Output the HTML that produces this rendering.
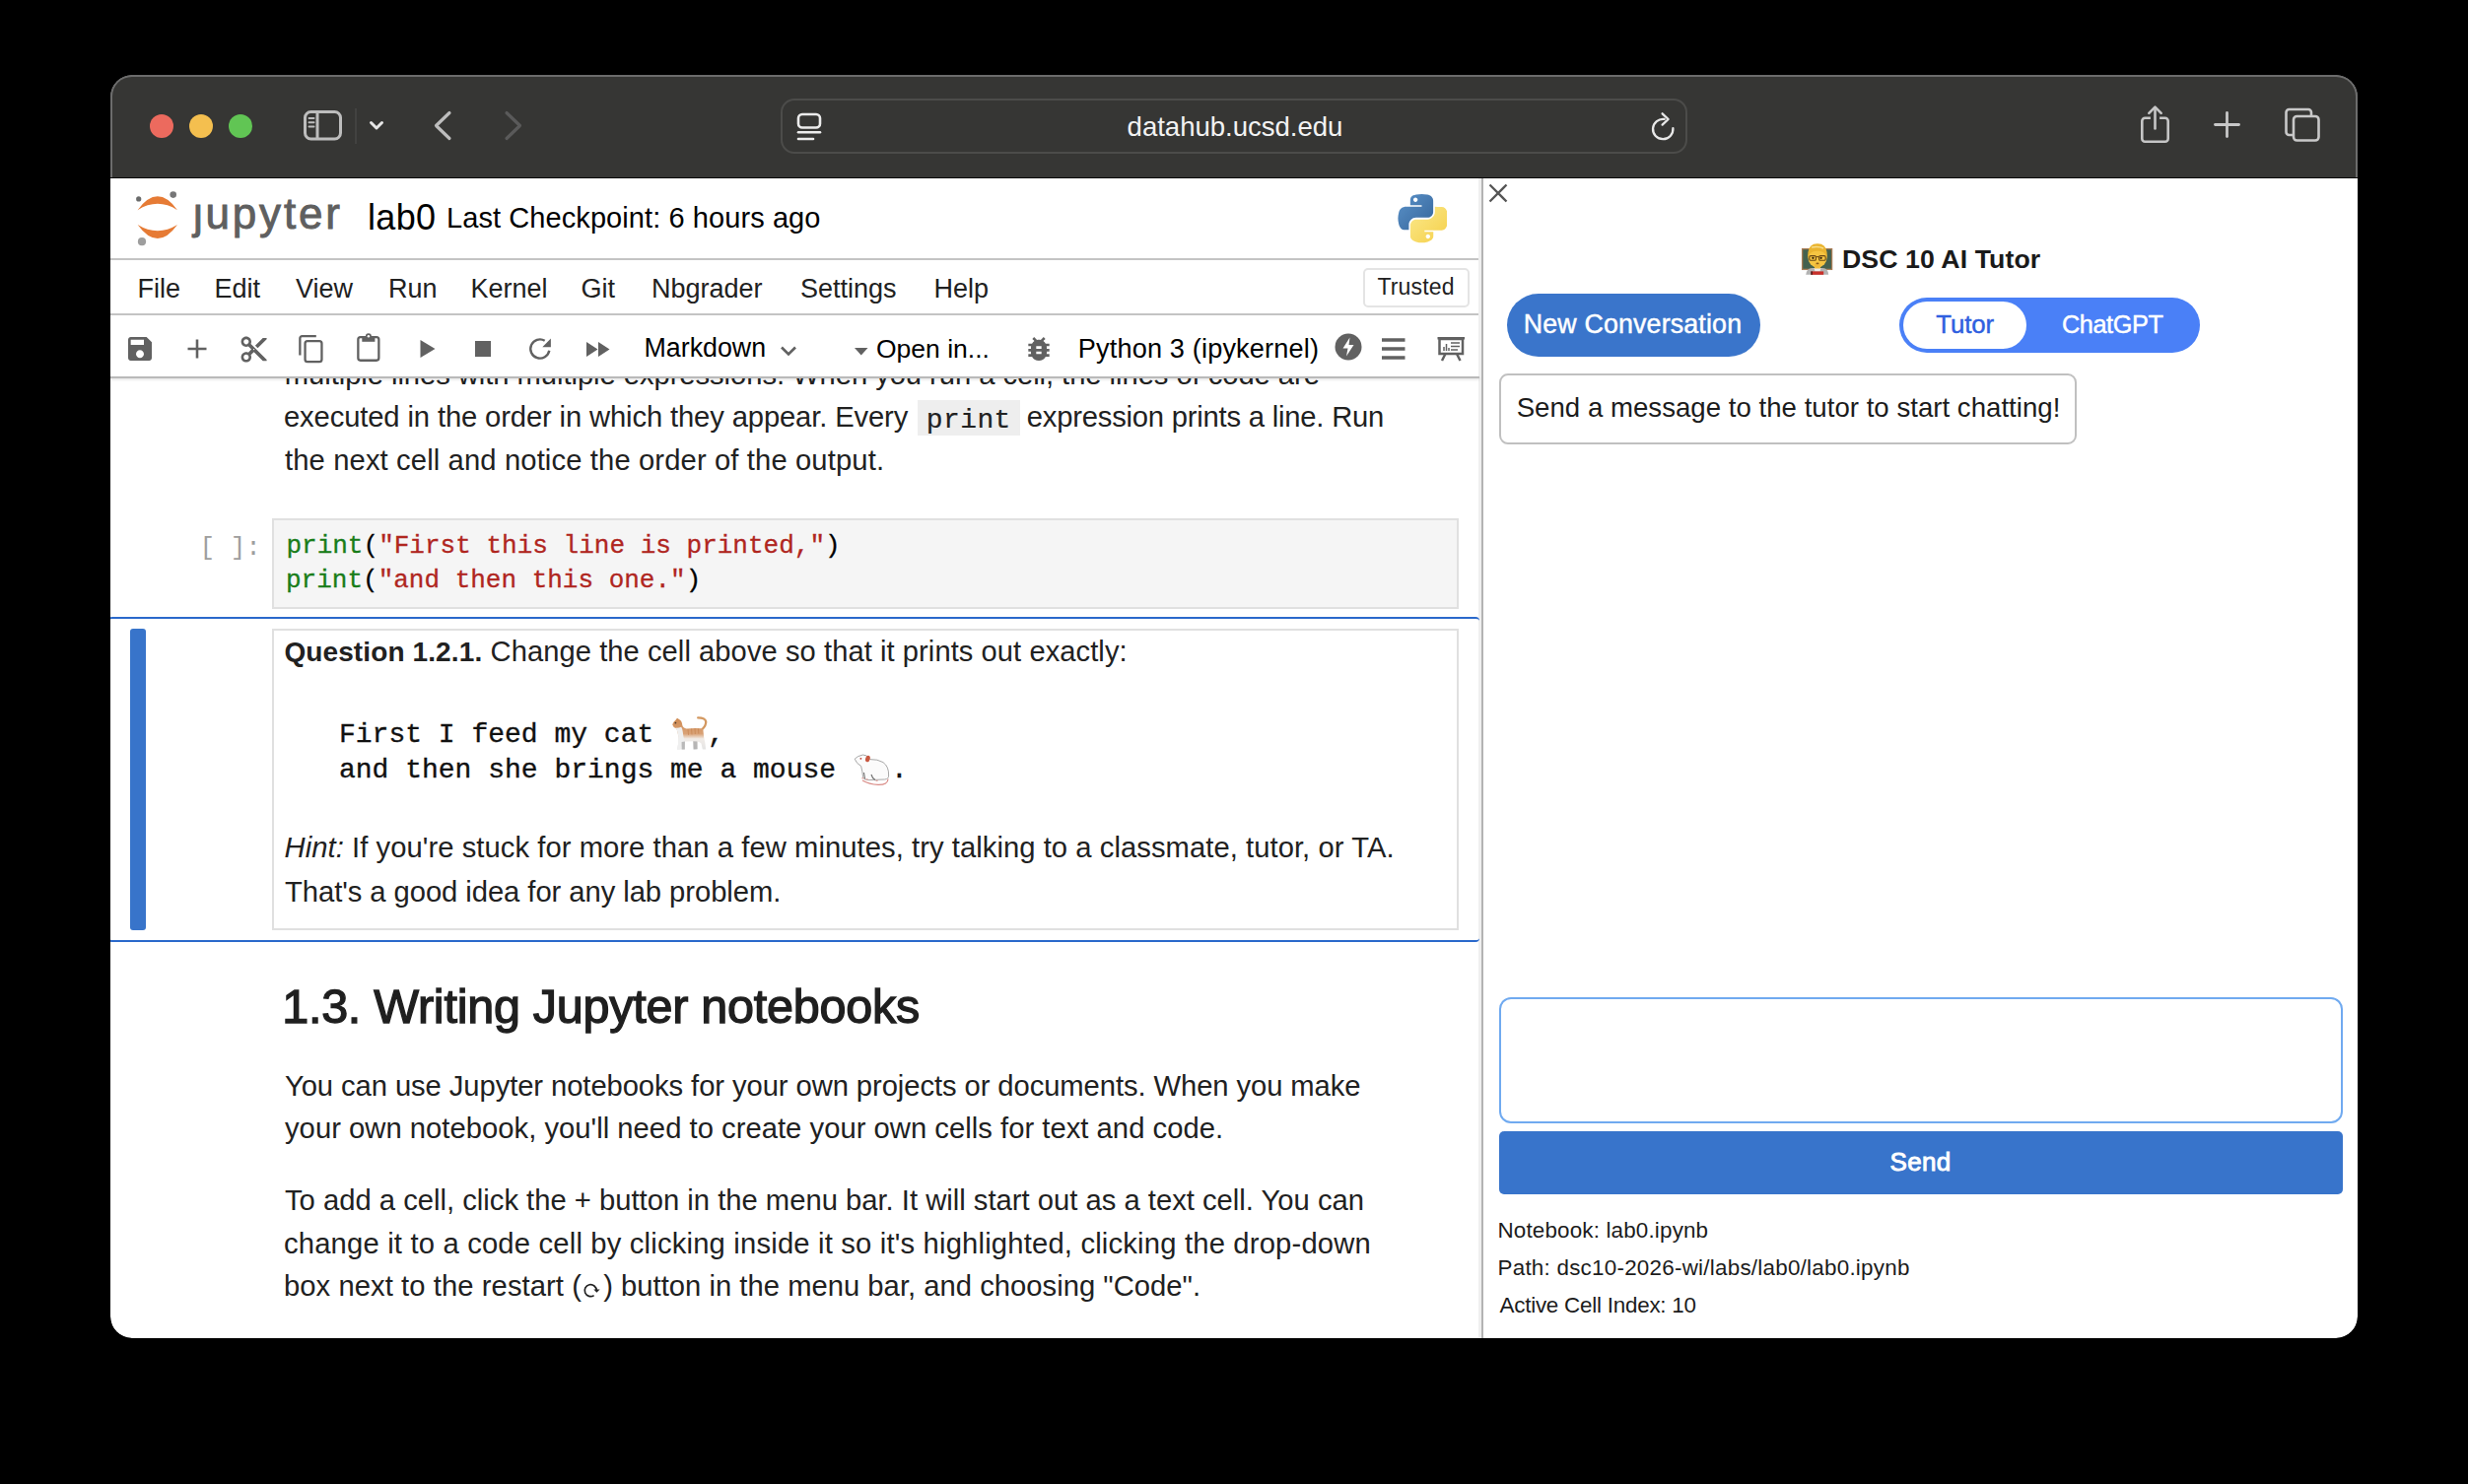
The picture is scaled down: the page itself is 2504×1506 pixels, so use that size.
<!DOCTYPE html><html><head><meta charset="utf-8"><style>
html,body{margin:0;padding:0;background:#000;width:2504px;height:1506px;overflow:hidden}
.t{position:absolute;white-space:pre;font-family:'Liberation Sans',sans-serif}
.r{position:absolute;display:block}
</style></head><body>
<div class="r" style="left:112px;top:76px;width:2280px;height:1282px;border-radius:22px;overflow:hidden;background:#fff">
</div>
<div class="r" style="left:112px;top:76px;width:2280px;height:105px;background:#363634;border-radius:22px 22px 0 0;box-sizing:border-box;border:2px solid #6c6c6c;border-bottom:none"></div>
<div class="r" style="left:112px;top:180px;width:2280px;height:1px;background:#0a0a0a"></div>
<svg class="r" style="left:140px;top:104px" width="130" height="48" viewBox="0 0 130 48"><circle cx="24" cy="24" r="12" fill="#ec6a5e"/><circle cx="64" cy="24" r="12" fill="#f4bf4f"/><circle cx="104" cy="24" r="12" fill="#61c554"/></svg>
<svg class="r" style="left:300px;top:104px" width="100" height="48" viewBox="0 0 100 48"><rect x="9.5" y="9.5" width="36" height="27.5" rx="6" fill="none" stroke="#bdbdbd" stroke-width="3"/>
<line x1="22" y1="9" x2="22" y2="37.5" stroke="#bdbdbd" stroke-width="3"/>
<line x1="13.5" y1="16" x2="18.5" y2="16" stroke="#bdbdbd" stroke-width="2" stroke-linecap="round"/>
<line x1="13.5" y1="20.3" x2="18.5" y2="20.3" stroke="#bdbdbd" stroke-width="2" stroke-linecap="round"/>
<line x1="13.5" y1="24.6" x2="18.5" y2="24.6" stroke="#bdbdbd" stroke-width="2" stroke-linecap="round"/>
<line x1="61" y1="6" x2="61" y2="42" stroke="#4c4c4a" stroke-width="1.2"/>
<polyline points="76.5,20.5 82,26 87.5,20.5" fill="none" stroke="#e6e6e6" stroke-width="3" stroke-linecap="round" stroke-linejoin="round"/></svg>
<svg class="r" style="left:430px;top:104px" width="110" height="48" viewBox="0 0 110 48"><polyline points="26,10.5 12.5,23.5 26,36.5" fill="none" stroke="#bdbdbd" stroke-width="3.2" stroke-linecap="round" stroke-linejoin="round"/>
<polyline points="84,10.5 97.5,23.5 84,36.5" fill="none" stroke="#5a5a5a" stroke-width="3.2" stroke-linecap="round" stroke-linejoin="round"/></svg>
<div class="r" style="left:792px;top:100px;width:920px;height:56px;box-sizing:border-box;border:2px solid #4c4c4a;border-radius:14px"></div>
<svg class="r" style="left:800px;top:108px" width="40" height="42" viewBox="0 0 40 42"><rect x="10" y="8" width="22" height="13.5" rx="4" fill="none" stroke="#ececec" stroke-width="2.6"/>
<line x1="10" y1="26.3" x2="32" y2="26.3" stroke="#ececec" stroke-width="2.6" stroke-linecap="round"/>
<line x1="10" y1="33" x2="25" y2="33" stroke="#ececec" stroke-width="2.6" stroke-linecap="round"/></svg>
<div class="t" style="left:1143.60px;top:110.69px;font-size:27.6px;line-height:35.88px;color:#f2f2f2;font-weight:400;font-style:normal;font-family:'Liberation Sans';letter-spacing:-0.040px;">datahub.ucsd.edu</div>
<svg class="r" style="left:1668px;top:106px" width="40" height="42" viewBox="0 0 40 42"><path d="M20.7 14.9 A10.2 10.2 0 1 0 29.4 24.2" fill="none" stroke="#e8e8e8" stroke-width="2.3" stroke-linecap="round"/>
<polyline points="18.6,9.3 24.6,15 18.6,20.6" fill="none" stroke="#e8e8e8" stroke-width="2.3" stroke-linecap="round" stroke-linejoin="round"/></svg>
<svg class="r" style="left:2160px;top:100px" width="210" height="52" viewBox="0 0 210 52"><path d="M21.9 19.7 H16.3 a3 3 0 0 0 -3 3 V40.7 a3 3 0 0 0 3 3 H36.7 a3 3 0 0 0 3 -3 V22.7 a3 3 0 0 0 -3 -3 H31.1" fill="none" stroke="#c6c6c6" stroke-width="2.6"/>
<line x1="26.5" y1="10" x2="26.5" y2="30.5" stroke="#c6c6c6" stroke-width="2.6" stroke-linecap="round"/>
<polyline points="20.3,14.8 26.5,8.6 32.7,14.8" fill="none" stroke="#c6c6c6" stroke-width="2.6" stroke-linecap="round" stroke-linejoin="round"/>
<line x1="99.5" y1="14.5" x2="99.5" y2="38.5" stroke="#c8c8c8" stroke-width="2.8" stroke-linecap="round"/>
<line x1="87.5" y1="26.5" x2="111.5" y2="26.5" stroke="#c8c8c8" stroke-width="2.8" stroke-linecap="round"/>
<path d="M167 37 H162.5 a3 3 0 0 1 -3 -3 V14 a3 3 0 0 1 3 -3 H182 a3 3 0 0 1 3 3 V18" fill="none" stroke="#c8c8c8" stroke-width="2.6"/>
<rect x="167" y="18" width="25.5" height="24.5" rx="3.5" fill="none" stroke="#c8c8c8" stroke-width="2.6"/></svg>
<div class="r" style="left:112px;top:262px;width:1389px;height:2px;background:#c4c4c4;height:1.5px"></div>
<div class="r" style="left:112px;top:318px;width:1389px;height:2px;background:#c4c4c4;height:1.5px"></div>
<div class="r" style="left:1500px;top:181px;width:3px;height:1177px;background:#efefef"></div>
<div class="r" style="left:1503px;top:181px;width:2px;height:1177px;background:#b3b3b3"></div>
<svg class="r" style="left:130px;top:190px" width="60" height="62" viewBox="0 0 60 62"><path d="M9.6 23.2 Q30 -4.5 50 23.2 Q30 10.5 9.6 23.2 Z" fill="#e67b35"/>
<path d="M9.6 38 Q30 66 50 38 Q30 50.5 9.6 38 Z" fill="#e67b35"/>
<circle cx="10.7" cy="11.9" r="2.6" fill="#6a6b6b"/>
<circle cx="45.7" cy="7.6" r="3.3" fill="#767677"/>
<circle cx="14" cy="55.2" r="4.1" fill="#9e9e9e"/></svg>
<div class="t" style="left:196.00px;top:187.95px;font-size:44px;line-height:57.2px;color:#5f5f5f;font-weight:400;font-style:normal;font-family:'Liberation Sans';letter-spacing:2.800px;-webkit-text-stroke:0.9px #5f5f5f">&#567;upyter</div>
<div class="t" style="left:373.00px;top:198.12px;font-size:36px;line-height:46.8px;color:#000;font-weight:400;font-style:normal;font-family:'Liberation Sans';letter-spacing:0.333px;">lab0</div>
<div class="t" style="left:453.00px;top:202.70px;font-size:29px;line-height:37.7px;color:#000;font-weight:400;font-style:normal;font-family:'Liberation Sans';letter-spacing:0.081px;">Last Checkpoint: 6 hours ago</div>
<svg class="r" style="left:1418px;top:197px" width="49.5" height="49.5" viewBox="0 0 111 111"><defs>
<linearGradient id="pyb" x1="0" y1="0" x2="1" y2="1"><stop offset="0" stop-color="#5b92c9"/><stop offset="1" stop-color="#35659a"/></linearGradient>
<linearGradient id="pyy" x1="0" y1="0" x2="1" y2="1"><stop offset="0" stop-color="#fbe98c"/><stop offset="1" stop-color="#f5cf48"/></linearGradient></defs>
<path fill="url(#pyb)" d="M54.9 0c-4.6 0-9 .4-12.8 1.1C30.8 3.1 28.8 7.3 28.8 15v10.2h26.1v3.4H19c-7.6 0-14.2 4.6-16.3 13.2-2.4 9.9-2.5 16.1 0 26.4 1.9 7.7 6.3 13.2 13.9 13.2h9V69.5c0-8.6 7.4-16.2 16.3-16.2h26c7.3 0 13.1-6 13.1-13.2V15c0-7.1-6-12.4-13.1-13.6C63.4.4 58.8 0 54.9 0zM40.7 8.1c2.7 0 4.9 2.2 4.9 5 0 2.7-2.2 4.9-4.9 4.9-2.7 0-4.9-2.2-4.9-4.9 0-2.8 2.2-5 4.9-5z"/>
<path fill="url(#pyy)" d="M84.8 28.6v11.9c0 9.2-7.8 17-16.7 17h-26c-7.1 0-13.1 6.1-13.1 13.2v24.8c0 7.1 6.2 11.2 13.1 13.2 8.3 2.4 16.3 2.9 26.1 0 6.6-1.9 13.1-5.7 13.1-13.2V85.5H61.2v-3.3h39.1c7.6 0 10.4-5.3 13-13.2 2.7-8.2 2.6-16 0-26.4-1.9-7.5-5.4-13.2-13-13.2h-9.8zM69.1 91.5c2.7 0 4.9 2.2 4.9 4.9 0 2.8-2.2 5-4.9 5-2.7 0-4.9-2.2-4.9-5 0-2.7 2.2-4.9 4.9-4.9z"/></svg>
<div class="t" style="left:139.50px;top:275.59px;font-size:27px;line-height:35.1px;color:#212121;font-weight:400;font-style:normal;font-family:'Liberation Sans';">File</div>
<div class="t" style="left:217.50px;top:275.59px;font-size:27px;line-height:35.1px;color:#212121;font-weight:400;font-style:normal;font-family:'Liberation Sans';">Edit</div>
<div class="t" style="left:300.00px;top:275.59px;font-size:27px;line-height:35.1px;color:#212121;font-weight:400;font-style:normal;font-family:'Liberation Sans';">View</div>
<div class="t" style="left:394.00px;top:275.59px;font-size:27px;line-height:35.1px;color:#212121;font-weight:400;font-style:normal;font-family:'Liberation Sans';">Run</div>
<div class="t" style="left:477.50px;top:275.59px;font-size:27px;line-height:35.1px;color:#212121;font-weight:400;font-style:normal;font-family:'Liberation Sans';">Kernel</div>
<div class="t" style="left:589.50px;top:275.59px;font-size:27px;line-height:35.1px;color:#212121;font-weight:400;font-style:normal;font-family:'Liberation Sans';">Git</div>
<div class="t" style="left:661.00px;top:275.59px;font-size:27px;line-height:35.1px;color:#212121;font-weight:400;font-style:normal;font-family:'Liberation Sans';">Nbgrader</div>
<div class="t" style="left:812.00px;top:275.59px;font-size:27px;line-height:35.1px;color:#212121;font-weight:400;font-style:normal;font-family:'Liberation Sans';">Settings</div>
<div class="t" style="left:947.50px;top:275.59px;font-size:27px;line-height:35.1px;color:#212121;font-weight:400;font-style:normal;font-family:'Liberation Sans';">Help</div>
<div class="r" style="left:1383px;top:272px;width:108px;height:40px;box-sizing:border-box;border:2px solid #e4e4e4;border-radius:5px"></div>
<div class="t" style="left:1397.40px;top:277.08px;font-size:23px;line-height:29.9px;color:#212121;font-weight:400;font-style:normal;font-family:'Liberation Sans';letter-spacing:0.167px;">Trusted</div>
<svg class="r" style="left:126px;top:338px" width="32" height="32" viewBox="0 0 24 24"><path fill="#616161" d="M17 3H5c-1.11 0-2 .9-2 2v14c0 1.1.89 2 2 2h14c1.1 0 2-.9 2-2V7l-4-4zm-5 16c-1.66 0-3-1.34-3-3s1.34-3 3-3 3 1.34 3 3-1.34 3-3 3zm3-10H5V5h10v4z"/></svg>
<svg class="r" style="left:186px;top:340px" width="28" height="28" viewBox="0 0 28 28"><path d="M14 4.5V23.5M4.5 14H23.5" stroke="#616161" stroke-width="2.6"/></svg>
<svg class="r" style="left:242px;top:339px" width="31.2" height="31.2" viewBox="0 0 24 24"><path fill="#616161" d="M9.64 7.64c.23-.5.36-1.05.36-1.64 0-2.21-1.79-4-4-4S2 3.79 2 6s1.79 4 4 4c.59 0 1.14-.13 1.64-.36L10 12l-2.36 2.36C7.14 14.13 6.59 14 6 14c-2.21 0-4 1.79-4 4s1.79 4 4 4 4-1.79 4-4c0-.59-.13-1.14-.36-1.64L12 14l7 7h3v-1L9.64 7.64zM6 8c-1.1 0-2-.89-2-2s.9-2 2-2 2 .89 2 2-.9 2-2 2zm0 12c-1.1 0-2-.89-2-2s.9-2 2-2 2 .89 2 2-.9 2-2 2zm6-7.5c-.28 0-.5-.22-.5-.5s.22-.5.5-.5.5.22.5.5-.22.5-.5.5zM19 3l-6 6 2 2 7-7V3z"/></svg>
<svg class="r" style="left:298px;top:336px" width="34" height="34" viewBox="0 0 34 34"><path d="M6.35 24.6 V7.4 a2.2 2.2 0 0 1 2.2 -2.25 H22.8" fill="none" stroke="#616161" stroke-width="2.3"/>
<rect x="11.55" y="10.15" width="16.9" height="21" rx="2.4" fill="none" stroke="#616161" stroke-width="2.3"/></svg>
<svg class="r" style="left:358px;top:334px" width="34" height="36" viewBox="0 0 34 36"><rect x="5.35" y="8.05" width="21" height="23.7" rx="2.4" fill="none" stroke="#616161" stroke-width="2.3"/>
<rect x="9.3" y="7.3" width="13.1" height="5.5" fill="#616161"/>
<circle cx="15.9" cy="7.3" r="3" fill="#616161"/><circle cx="15.9" cy="7.3" r="1.2" fill="#fff"/></svg>
<svg class="r" style="left:420px;top:340px" width="28" height="28" viewBox="0 0 28 28"><path d="M6.5 5 L21.5 14 L6.5 23 Z" fill="#616161"/></svg>
<div class="r" style="left:481.5px;top:346px;width:16.5px;height:16px;background:#616161"></div>
<svg class="r" style="left:532px;top:338px" width="32" height="32" viewBox="0 0 32 32"><path d="M25.3 17.8 A9.6 9.6 0 1 1 20.7 7.7" fill="none" stroke="#616161" stroke-width="2.4"/>
<path d="M26.9 5.5 V14.2 H18.3 Z" fill="#616161"/></svg>
<svg class="r" style="left:590px;top:340px" width="34" height="28" viewBox="0 0 34 28"><path d="M5 7 L16.5 14.5 L5 22 Z M17 7 L28.5 14.5 L17 22 Z" fill="#616161"/></svg>
<div class="t" style="left:653.50px;top:336.29px;font-size:26.8px;line-height:34.84px;color:#000;font-weight:400;font-style:normal;font-family:'Liberation Sans';">Markdown</div>
<svg class="r" style="left:786px;top:346px" width="28" height="22" viewBox="0 0 28 22"><polyline points="7,6.5 14,13.5 21,6.5" fill="none" stroke="#616161" stroke-width="2.6"/></svg>
<svg class="r" style="left:862px;top:348px" width="24" height="18" viewBox="0 0 24 18"><path d="M5 5 H18.5 L11.75 12.6 Z" fill="#616161"/></svg>
<div class="t" style="left:889.00px;top:336.59px;font-size:26.5px;line-height:34.45px;color:#000;font-weight:400;font-style:normal;font-family:'Liberation Sans';">Open in...</div>
<svg class="r" style="left:1038px;top:338px" width="32" height="32" viewBox="0 0 24 24"><path fill="#616161" d="M20 8h-2.81c-.45-.78-1.07-1.45-1.82-1.96L17 4.41 15.59 3l-2.17 2.17C12.96 5.06 12.49 5 12 5c-.49 0-.96.06-1.41.17L8.41 3 7 4.41l1.62 1.63C7.88 6.55 7.26 7.22 6.81 8H4v2h2.09c-.05.33-.09.66-.09 1v1H4v2h2v1c0 .34.04.67.09 1H4v2h2.81c1.04 1.79 2.97 3 5.19 3s4.15-1.21 5.19-3H20v-2h-2.09c.05-.33.09-.66.09-1v-1h2v-2h-2v-1c0-.34-.04-.67-.09-1H20V8zm-6 8h-4v-2h4v2zm0-4h-4v-2h4v2z"/></svg>
<div class="t" style="left:1093.80px;top:335.99px;font-size:27.1px;line-height:35.23px;color:#000;font-weight:400;font-style:normal;font-family:'Liberation Sans';letter-spacing:0.168px;">Python 3 (ipykernel)</div>
<svg class="r" style="left:1352px;top:336px" width="32" height="32" viewBox="0 0 32 32"><circle cx="16" cy="16" r="13.5" fill="#616161"/>
<path d="M17.5 6.5 L10.5 17.5 H15.5 L14 25.5 L21.5 14 H16.5 Z" fill="#fff"/></svg>
<svg class="r" style="left:1398px;top:338px" width="32" height="32" viewBox="0 0 32 32"><path d="M4 7H27.5 M4 16H27.5 M4 25H27.5" stroke="#616161" stroke-width="3.6"/></svg>
<svg class="r" style="left:1454px;top:336px" width="36" height="34" viewBox="0 0 36 34"><rect x="4.5" y="6" width="27.5" height="2.5" fill="#616161"/>
<rect x="6.5" y="8" width="23.5" height="15" fill="none" stroke="#616161" stroke-width="2.5"/>
<path d="M11 20V16 M13.5 20V13 M16 20V17" stroke="#616161" stroke-width="1.5"/>
<path d="M18 12H27 M18 15.5H27 M18 19H25" stroke="#616161" stroke-width="1.5"/>
<path d="M12.5 23 L9 30 M24 23 L27.5 30" stroke="#616161" stroke-width="2.5"/></svg>
<div class="r" style="left:112px;top:383px;width:1389px;height:975px;overflow:hidden">
<div class="t" style="left:176.80px;top:-21.40px;font-size:29.2px;line-height:37.96px;color:#212121;font-weight:400;font-style:normal;font-family:'Liberation Sans';letter-spacing:-0.053px;">multiple lines with multiple expressions. When you run a cell, the lines of code are</div>
<div class="r" style="left:819px;top:23px;width:104px;height:35.5px;background:#eeeeee"></div>
<div class="t" style="left:176.00px;top:22.30px;font-size:29.2px;line-height:37.96px;color:#212121;font-weight:400;font-style:normal;font-family:'Liberation Sans';letter-spacing:-0.125px;">executed in the order in which they appear. Every</div>
<div class="t" style="left:827.80px;top:25.75px;font-size:28px;line-height:36.4px;color:#212121;font-weight:400;font-style:normal;font-family:'Liberation Mono';letter-spacing:0.400px;-webkit-text-stroke:0.2px #212121">print</div>
<div class="t" style="left:929.80px;top:22.30px;font-size:29.2px;line-height:37.96px;color:#212121;font-weight:400;font-style:normal;font-family:'Liberation Sans';letter-spacing:-0.207px;">expression prints a line. Run</div>
<div class="t" style="left:177.00px;top:65.60px;font-size:29.2px;line-height:37.96px;color:#212121;font-weight:400;font-style:normal;font-family:'Liberation Sans';letter-spacing:0.125px;">the next cell and notice the order of the output.</div>
<div class="t" style="left:90.50px;top:157.18px;font-size:26px;line-height:33.8px;color:#9e9e9e;font-weight:400;font-style:normal;font-family:'Liberation Mono';">[ ]:</div>
<div class="r" style="left:164px;top:143px;width:1204px;height:92px;box-sizing:border-box;border:2px solid #e0e0e0;background:#f5f5f5"></div>
<div class="t" style="left:178.40px;top:154.68px;font-size:26px;line-height:33.8px;color:#000;font-weight:400;font-style:normal;font-family:'Liberation Mono';letter-spacing:0.017px;-webkit-text-stroke:0.3px currentColor"><span style="color:#197d19">print</span>(<span style="color:#b0261f">"First this line is printed,"</span>)</div>
<div class="t" style="left:178.00px;top:190.48px;font-size:26px;line-height:33.8px;color:#000;font-weight:400;font-style:normal;font-family:'Liberation Mono';-webkit-text-stroke:0.3px currentColor"><span style="color:#197d19">print</span>(<span style="color:#b0261f">"and then this one."</span>)</div>
<div class="r" style="left:-2px;top:243px;width:1391px;height:330px;box-sizing:border-box;border-top:2.2px solid #2a69cb;border-bottom:2.2px solid #2a69cb;border-radius:4px"></div>
<div class="r" style="left:20px;top:255px;width:16px;height:306px;background:#3874ca;border-radius:3px"></div>
<div class="r" style="left:164px;top:255px;width:1204px;height:306px;box-sizing:border-box;border:2px solid #e0e0e0"></div>
<div class="t" style="left:176.40px;top:261.39px;font-size:28px;line-height:36.4px;color:#212121;font-weight:400;font-style:normal;font-family:'Liberation Sans';letter-spacing:0.114px;"><b>Question 1.2.1.</b></div>
<div class="t" style="left:385.60px;top:260.30px;font-size:29.1px;line-height:37.83px;color:#212121;font-weight:400;font-style:normal;font-family:'Liberation Sans';letter-spacing:0.078px;">Change the cell above so that it prints out exactly:</div>
<div class="t" style="left:232.00px;top:344.95px;font-size:28px;line-height:36.4px;color:#111;font-weight:400;font-style:normal;font-family:'Liberation Mono';-webkit-text-stroke:0.35px #111">First I feed my cat</div>
<div class="t" style="left:606.00px;top:344.95px;font-size:28px;line-height:36.4px;color:#111;font-weight:400;font-style:normal;font-family:'Liberation Mono';-webkit-text-stroke:0.35px #111">,</div>
<div class="t" style="left:232.00px;top:381.35px;font-size:28px;line-height:36.4px;color:#111;font-weight:400;font-style:normal;font-family:'Liberation Mono';-webkit-text-stroke:0.35px #111">and then she brings me a mouse</div>
<div class="t" style="left:792.00px;top:381.35px;font-size:28px;line-height:36.4px;color:#111;font-weight:400;font-style:normal;font-family:'Liberation Mono';-webkit-text-stroke:0.35px #111">.</div>
<svg class="r" style="left:564px;top:339px" width="50" height="44" viewBox="0 0 50 44"><defs><linearGradient id="catg" x1="0" y1="0" x2="0" y2="1">
<stop offset="0" stop-color="#cf8a52"/><stop offset="0.5" stop-color="#d9a276"/><stop offset="0.66" stop-color="#f1ece8"/><stop offset="1" stop-color="#e4e4e4"/></linearGradient></defs>
<path d="M36 18.5 Q40.6 14.5 40.2 10.2 Q39.4 6.4 32.2 6.4" fill="none" stroke="#d39860" stroke-width="2.3" stroke-linecap="round"/>
<path d="M6.2 13.2 Q7.5 10 9.5 8.8 L11 6.8 L13 8 Q16 9.5 16.3 14 Q17 16.8 20.5 17.6 Q28 16.4 35.5 17.2 L37.4 18.5 Q37.8 26 39.3 31.5 L40.2 38.4 L36.8 38.6 L35.5 32.5 Q34 31 31.5 30.5 L31.6 38.2 L27.6 38.4 L27.2 30.2 Q23 30.3 19 30.4 L18.8 38.6 L15.6 38.4 L16.2 33 L14.4 38.6 L11 38.4 Q12.6 33 12.3 26 Q11.6 19.4 10 17.2 Q7 16.4 6.2 13.2 Z" fill="url(#catg)"/>
<path d="M9.6 16.6 Q11.6 20 12.2 25 Q12.7 32 11 38.4 L14.4 38.6 L16.2 33 L15.6 38.4 L18.8 38.6 L19 30.4 Q17.2 27 16.8 21 Q16.4 17 15.2 15.8 Q12 17 9.6 16.6 Z" fill="#efefef"/>
<path d="M15.6 31 L18.9 30.6 L18.8 38.6 L15.6 38.4 Z M27.3 30.3 L31.5 30.5 L31.6 38.2 L27.6 38.4 Z" fill="#8c8c8c" opacity="0.55"/>
<path d="M22 18 L22.6 24 M25.5 17.4 L26 23.5 M29 17.2 L29.4 23 M32.5 17.4 L32.8 22.6" stroke="#c07a45" stroke-width="0.8" opacity="0.6"/>
<circle cx="9.4" cy="11.6" r="0.9" fill="#4a3a2a"/></svg>
<svg class="r" style="left:748px;top:377px" width="60" height="42" viewBox="0 0 60 42"><path d="M7.2 10.2 Q9.5 7.2 15.5 6 Q19.5 5.6 22.6 10.6 Q30.5 10.3 36 13.6 Q42 18 41.6 27 Q41.8 30.6 37.5 31 L21 31.6 Q16.4 31.5 15.6 28.8 Q15 22.4 13.6 17.4 Q9 15 7.2 10.2 Z" fill="#fbfbfb" stroke="#9d9d9d" stroke-width="0.9"/>
<ellipse cx="20.4" cy="10" rx="2.3" ry="3.3" fill="#c8573f" transform="rotate(15 20.4 10)"/>
<circle cx="13.4" cy="9.8" r="0.9" fill="#b8372a"/>
<path d="M16.5 24 L17.5 30.5 M24 26 Q25 30 28 31.5" stroke="#6e6e6e" stroke-width="1.1" fill="none"/>
<path d="M41 30.5 Q41 36.5 31 36.4 Q22 36 15 32" stroke="#d98b86" stroke-width="1.2" fill="none"/>
<ellipse cx="15.4" cy="29.8" rx="1.3" ry="0.8" fill="#e0a4a0"/><ellipse cx="19.6" cy="31" rx="1.3" ry="0.8" fill="#e0a4a0"/><ellipse cx="29.6" cy="32.2" rx="1.3" ry="0.8" fill="#e0a4a0"/></svg>
<div class="t" style="left:176.60px;top:459.30px;font-size:29.2px;line-height:37.96px;color:#212121;font-weight:400;font-style:normal;font-family:'Liberation Sans';letter-spacing:0.059px;"><i>Hint:</i> If you're stuck for more than a few minutes, try talking to a classmate, tutor, or TA.</div>
<div class="t" style="left:177.00px;top:503.60px;font-size:29.2px;line-height:37.96px;color:#212121;font-weight:400;font-style:normal;font-family:'Liberation Sans';letter-spacing:-0.053px;">That's a good idea for any lab problem.</div>
<div class="t" style="left:174.20px;top:606.66px;font-size:48.5px;line-height:63.05px;color:#1f1f1f;font-weight:400;font-style:normal;font-family:'Liberation Sans';letter-spacing:-0.248px;-webkit-text-stroke:1.35px #1f1f1f">1.3. Writing Jupyter notebooks</div>
<div class="t" style="left:177.00px;top:700.90px;font-size:29.2px;line-height:37.96px;color:#212121;font-weight:400;font-style:normal;font-family:'Liberation Sans';letter-spacing:-0.074px;">You can use Jupyter notebooks for your own projects or documents. When you make</div>
<div class="t" style="left:177.00px;top:744.40px;font-size:29.2px;line-height:37.96px;color:#212121;font-weight:400;font-style:normal;font-family:'Liberation Sans';letter-spacing:0.030px;">your own notebook, you'll need to create your own cells for text and code.</div>
<div class="t" style="left:177.00px;top:816.90px;font-size:29.2px;line-height:37.96px;color:#212121;font-weight:400;font-style:normal;font-family:'Liberation Sans';letter-spacing:0.007px;">To add a cell, click the + button in the menu bar. It will start out as a text cell. You can</div>
<div class="t" style="left:176.00px;top:861.10px;font-size:29.2px;line-height:37.96px;color:#212121;font-weight:400;font-style:normal;font-family:'Liberation Sans';letter-spacing:0.187px;">change it to a code cell by clicking inside it so it's highlighted, clicking the drop-down</div>
<div class="t" style="left:176.00px;top:904.40px;font-size:29.2px;line-height:37.96px;color:#212121;font-weight:400;font-style:normal;font-family:'Liberation Sans';letter-spacing:0.075px;">box next to the restart (</div>
<svg class="r" style="left:478px;top:917px" width="22" height="20" viewBox="0 0 22 20"><path d="M12.6 14.6 A6 6 0 1 1 15.2 9.6" fill="none" stroke="#212121" stroke-width="1.7"/><path d="M12.3 8.6 L18.6 8.6 L15.4 11.8 Z" fill="#212121"/></svg>
<div class="t" style="left:500.20px;top:904.40px;font-size:29.2px;line-height:37.96px;color:#212121;font-weight:400;font-style:normal;font-family:'Liberation Sans';letter-spacing:0.022px;">) button in the menu bar, and choosing "Code".</div>
</div>
<div class="r" style="left:112px;top:382px;width:1389px;height:2px;background:#bababa;box-shadow:0 1px 3px rgba(0,0,0,0.16)"></div>
<svg class="r" style="left:1505px;top:181px" width="32" height="32" viewBox="0 0 32 32"><path d="M6.5 6.5 L23.5 23.5 M23.5 6.5 L6.5 23.5" stroke="#555" stroke-width="2.3"/></svg>
<svg class="r" style="left:1820px;top:240px" width="46" height="44" viewBox="0 0 46 44"><rect x="8.6" y="12.6" width="30" height="20.8" fill="#44614f" stroke="#a87c55" stroke-width="1.3"/>
<path d="M12.2 38.8 Q13 32.2 18.5 32 L29.5 32 Q34.6 32.2 35.2 38.8 Z" fill="#b3b3b3"/>
<path d="M20.5 32 H27.5 L26.5 35.5 H21.5Z" fill="#ececec"/>
<rect x="17.4" y="35.4" width="12.8" height="3.4" fill="#c9302a"/>
<rect x="17.4" y="35.4" width="1.4" height="3.4" fill="#3a1a1a"/>
<ellipse cx="24" cy="21.5" rx="9.6" ry="10" fill="#f5c542"/>
<rect x="21" y="28" width="6" height="4.5" fill="#f0b93a"/>
<path d="M14.3 22 Q13.2 7 24 7.2 Q34.8 7 33.7 22 Q32 15.5 27 15 Q20 14.2 16.5 17 Q15 19 14.3 22Z" fill="#eab42f"/>
<path d="M18 11 Q25 9.5 30 12" stroke="#f7dd8a" stroke-width="1.6" fill="none"/>
<rect x="15.8" y="19.6" width="6.6" height="4.6" rx="1.3" fill="none" stroke="#6b4a16" stroke-width="1.1"/>
<rect x="25.6" y="19.6" width="6.6" height="4.6" rx="1.3" fill="none" stroke="#6b4a16" stroke-width="1.1"/>
<path d="M22.4 20.6 H25.6" stroke="#6b4a16" stroke-width="1.1"/>
<circle cx="19.4" cy="21.8" r="1.1" fill="#2a1a0a"/><circle cx="27.6" cy="21.8" r="1.1" fill="#2a1a0a"/>
<ellipse cx="24" cy="27.4" rx="1.6" ry="0.8" fill="#8a5a1a"/></svg>
<div class="t" style="left:1869.00px;top:245.79px;font-size:26.7px;line-height:34.71px;color:#1a1a1a;font-weight:700;font-style:normal;font-family:'Liberation Sans';letter-spacing:0.071px;">DSC 10 AI Tutor</div>
<div class="r" style="left:1529px;top:298px;width:257px;height:64px;background:#3a75cb;border-radius:32px"></div>
<div class="t" style="left:1545.70px;top:312.49px;font-size:26.8px;line-height:34.84px;color:#fff;font-weight:400;font-style:normal;font-family:'Liberation Sans';letter-spacing:0.160px;-webkit-text-stroke:0.45px #fff">New Conversation</div>
<div class="r" style="left:1927px;top:302px;width:305px;height:56px;background:#4a80f7;border-radius:28px"></div>
<div class="r" style="left:1931px;top:306px;width:125px;height:48px;background:#fff;border-radius:24px"></div>
<div class="t" style="left:1964.20px;top:312.59px;font-size:25.8px;line-height:33.54px;color:#2f5fe0;font-weight:400;font-style:normal;font-family:'Liberation Sans';letter-spacing:-0.100px;-webkit-text-stroke:0.45px #2f5fe0">Tutor</div>
<div class="t" style="left:2092.00px;top:313.08px;font-size:25.3px;line-height:32.89px;color:#fff;font-weight:400;font-style:normal;font-family:'Liberation Sans';letter-spacing:-0.433px;-webkit-text-stroke:0.45px #fff">ChatGPT</div>
<div class="r" style="left:1521px;top:379px;width:586px;height:72px;box-sizing:border-box;border:2px solid #c0c0c0;border-radius:9px"></div>
<div class="t" style="left:1538.70px;top:396.39px;font-size:27.6px;line-height:35.88px;color:#1c1c1c;font-weight:400;font-style:normal;font-family:'Liberation Sans';letter-spacing:0.022px;">Send a message to the tutor to start chatting!</div>
<div class="r" style="left:1521px;top:1012px;width:856px;height:128px;box-sizing:border-box;border:2px solid #70aaf0;border-radius:12px"></div>
<div class="r" style="left:1521px;top:1148px;width:856px;height:64px;background:#3874cb;border-radius:5px"></div>
<div class="t" style="left:1917.50px;top:1162.79px;font-size:26px;line-height:33.8px;color:#fff;font-weight:400;font-style:normal;font-family:'Liberation Sans';letter-spacing:0.333px;-webkit-text-stroke:0.9px #fff">Send</div>
<div class="t" style="left:1519.50px;top:1233.67px;font-size:22.4px;line-height:29.12px;color:#1c1c1c;font-weight:400;font-style:normal;font-family:'Liberation Sans';letter-spacing:0.168px;">Notebook: lab0.ipynb</div>
<div class="t" style="left:1519.50px;top:1271.67px;font-size:22.4px;line-height:29.12px;color:#1c1c1c;font-weight:400;font-style:normal;font-family:'Liberation Sans';letter-spacing:0.246px;">Path: dsc10-2026-wi/labs/lab0/lab0.ipynb</div>
<div class="t" style="left:1521.50px;top:1309.67px;font-size:22.4px;line-height:29.12px;color:#1c1c1c;font-weight:400;font-style:normal;font-family:'Liberation Sans';letter-spacing:-0.230px;">Active Cell Index: 10</div>
<svg class="r" style="left:0;top:0" width="2504" height="1506"><path fill="#000" fill-rule="evenodd" d="M0 0H2504V1506H0Z M134 76 H2370 A22 22 0 0 1 2392 98 V1336 A22 22 0 0 1 2370 1358 H134 A22 22 0 0 1 112 1336 V98 A22 22 0 0 1 134 76 Z"/></svg>
</body></html>
